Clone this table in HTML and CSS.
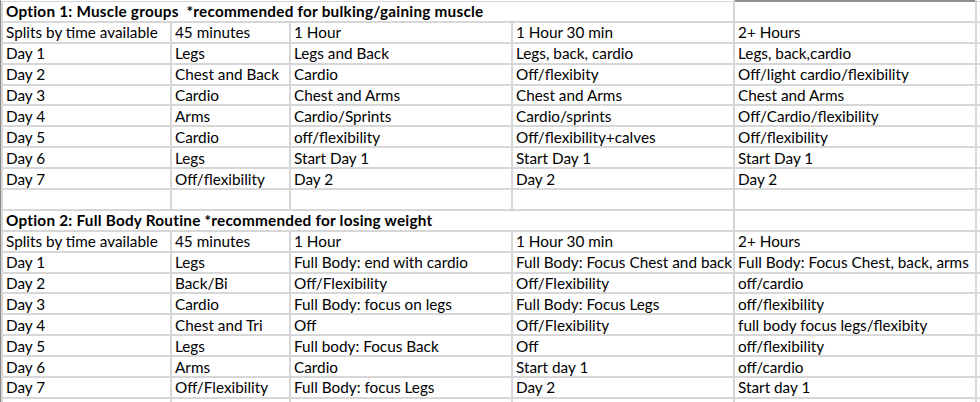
FILE: index.html
```html
<!DOCTYPE html>
<html>
<head>
<meta charset="utf-8">
<link rel="stylesheet" href="styles.css">
</head>
<body>
<div class="sheet">
<table class="grid">
<colgroup>
<col class="c-a"><col class="c-b"><col class="c-c"><col class="c-d"><col class="c-e"><col class="c-f">
</colgroup>
<tbody>
<tr class="top"><td colspan="4" class="title">Option 1: Muscle groups &nbsp;*recommended for bulking/gaining muscle</td><td class="sel"></td><td></td></tr>
<tr><td>Splits by time available</td><td>45 minutes</td><td>1 Hour</td><td>1 Hour 30 min</td><td>2+ Hours</td><td></td></tr>
<tr><td>Day 1</td><td>Legs</td><td>Legs and Back</td><td>Legs, back, cardio</td><td>Legs, back,cardio</td><td></td></tr>
<tr><td>Day 2</td><td>Chest and Back</td><td>Cardio</td><td>Off/flexibity</td><td>Off/light cardio/flexibility</td><td></td></tr>
<tr><td>Day 3</td><td>Cardio</td><td>Chest and Arms</td><td>Chest and Arms</td><td>Chest and Arms</td><td></td></tr>
<tr><td>Day 4</td><td>Arms</td><td>Cardio/Sprints</td><td>Cardio/sprints</td><td>Off/Cardio/flexibility</td><td></td></tr>
<tr><td>Day 5</td><td>Cardio</td><td>off/flexibility</td><td>Off/flexibility+calves</td><td>Off/flexibility</td><td></td></tr>
<tr><td>Day 6</td><td>Legs</td><td>Start Day 1</td><td>Start Day 1</td><td>Start Day 1</td><td></td></tr>
<tr><td>Day 7</td><td>Off/flexibility</td><td>Day 2</td><td>Day 2</td><td>Day 2</td><td></td></tr>
<tr><td></td><td></td><td></td><td></td><td></td><td></td></tr>
<tr><td colspan="4" class="title">Option 2: Full Body Routine *recommended for losing weight</td><td></td><td></td></tr>
<tr><td>Splits by time available</td><td>45 minutes</td><td>1 Hour</td><td>1 Hour 30 min</td><td>2+ Hours</td><td></td></tr>
<tr><td>Day 1</td><td>Legs</td><td>Full Body: end with cardio</td><td>Full Body: Focus Chest and back</td><td>Full Body: Focus Chest, back, arms</td><td></td></tr>
<tr><td>Day 2</td><td>Back/Bi</td><td>Off/Flexibility</td><td>Off/Flexibility</td><td>off/cardio</td><td></td></tr>
<tr><td>Day 3</td><td>Cardio</td><td>Full Body: focus on legs</td><td>Full Body: Focus Legs</td><td>off/flexibility</td><td></td></tr>
<tr><td>Day 4</td><td>Chest and Tri</td><td>Off</td><td>Off/Flexibility</td><td>full body focus legs/flexibity</td><td></td></tr>
<tr><td>Day 5</td><td>Legs</td><td>Full body: Focus Back</td><td>Off</td><td>off/flexibility</td><td></td></tr>
<tr><td>Day 6</td><td>Arms</td><td>Cardio</td><td>Start day 1</td><td>off/cardio</td><td></td></tr>
<tr><td>Day 7</td><td>Off/Flexibility</td><td>Full Body: focus Legs</td><td>Day 2</td><td>Start day 1</td><td></td></tr>
<tr><td></td><td></td><td></td><td></td><td></td><td></td></tr>
</tbody>
</table>
</div>
</body>
</html>
```
FILE: styles.css
```css
html, body {
  margin: 0;
  padding: 0;
  background: #ffffff;
}
.sheet {
  width: 980px;
  height: 402px;
  overflow: hidden;
  border-left: 1px solid #8a8a8a;
  box-sizing: border-box;
}
.grid {
  border-collapse: collapse;
  table-layout: fixed;
  width: 1100px;
  font-family: Lato, "Liberation Sans", sans-serif;
  font-size: 15.3px;
  color: #000;
}
.c-a { width: 169px; }
.c-b { width: 119px; }
.c-c { width: 222px; }
.c-d { width: 222px; }
.c-e { width: 242px; }
.c-f { width: 126px; }
.grid td {
  border: 2px solid #d7d7d7;
  height: 18.9px;
  padding: 0 0 0 3px;
  line-height: 18px;
  white-space: nowrap;
  overflow: hidden;
  vertical-align: middle;
}
.grid tr.top td {
  border-top: 1px solid #d7d7d7;
}
.grid tr.top td.sel {
  border-top: 2px solid #8e8e8e;
}
.grid td.title {
  font-weight: bold;
  letter-spacing: 0.24px;
}
```
